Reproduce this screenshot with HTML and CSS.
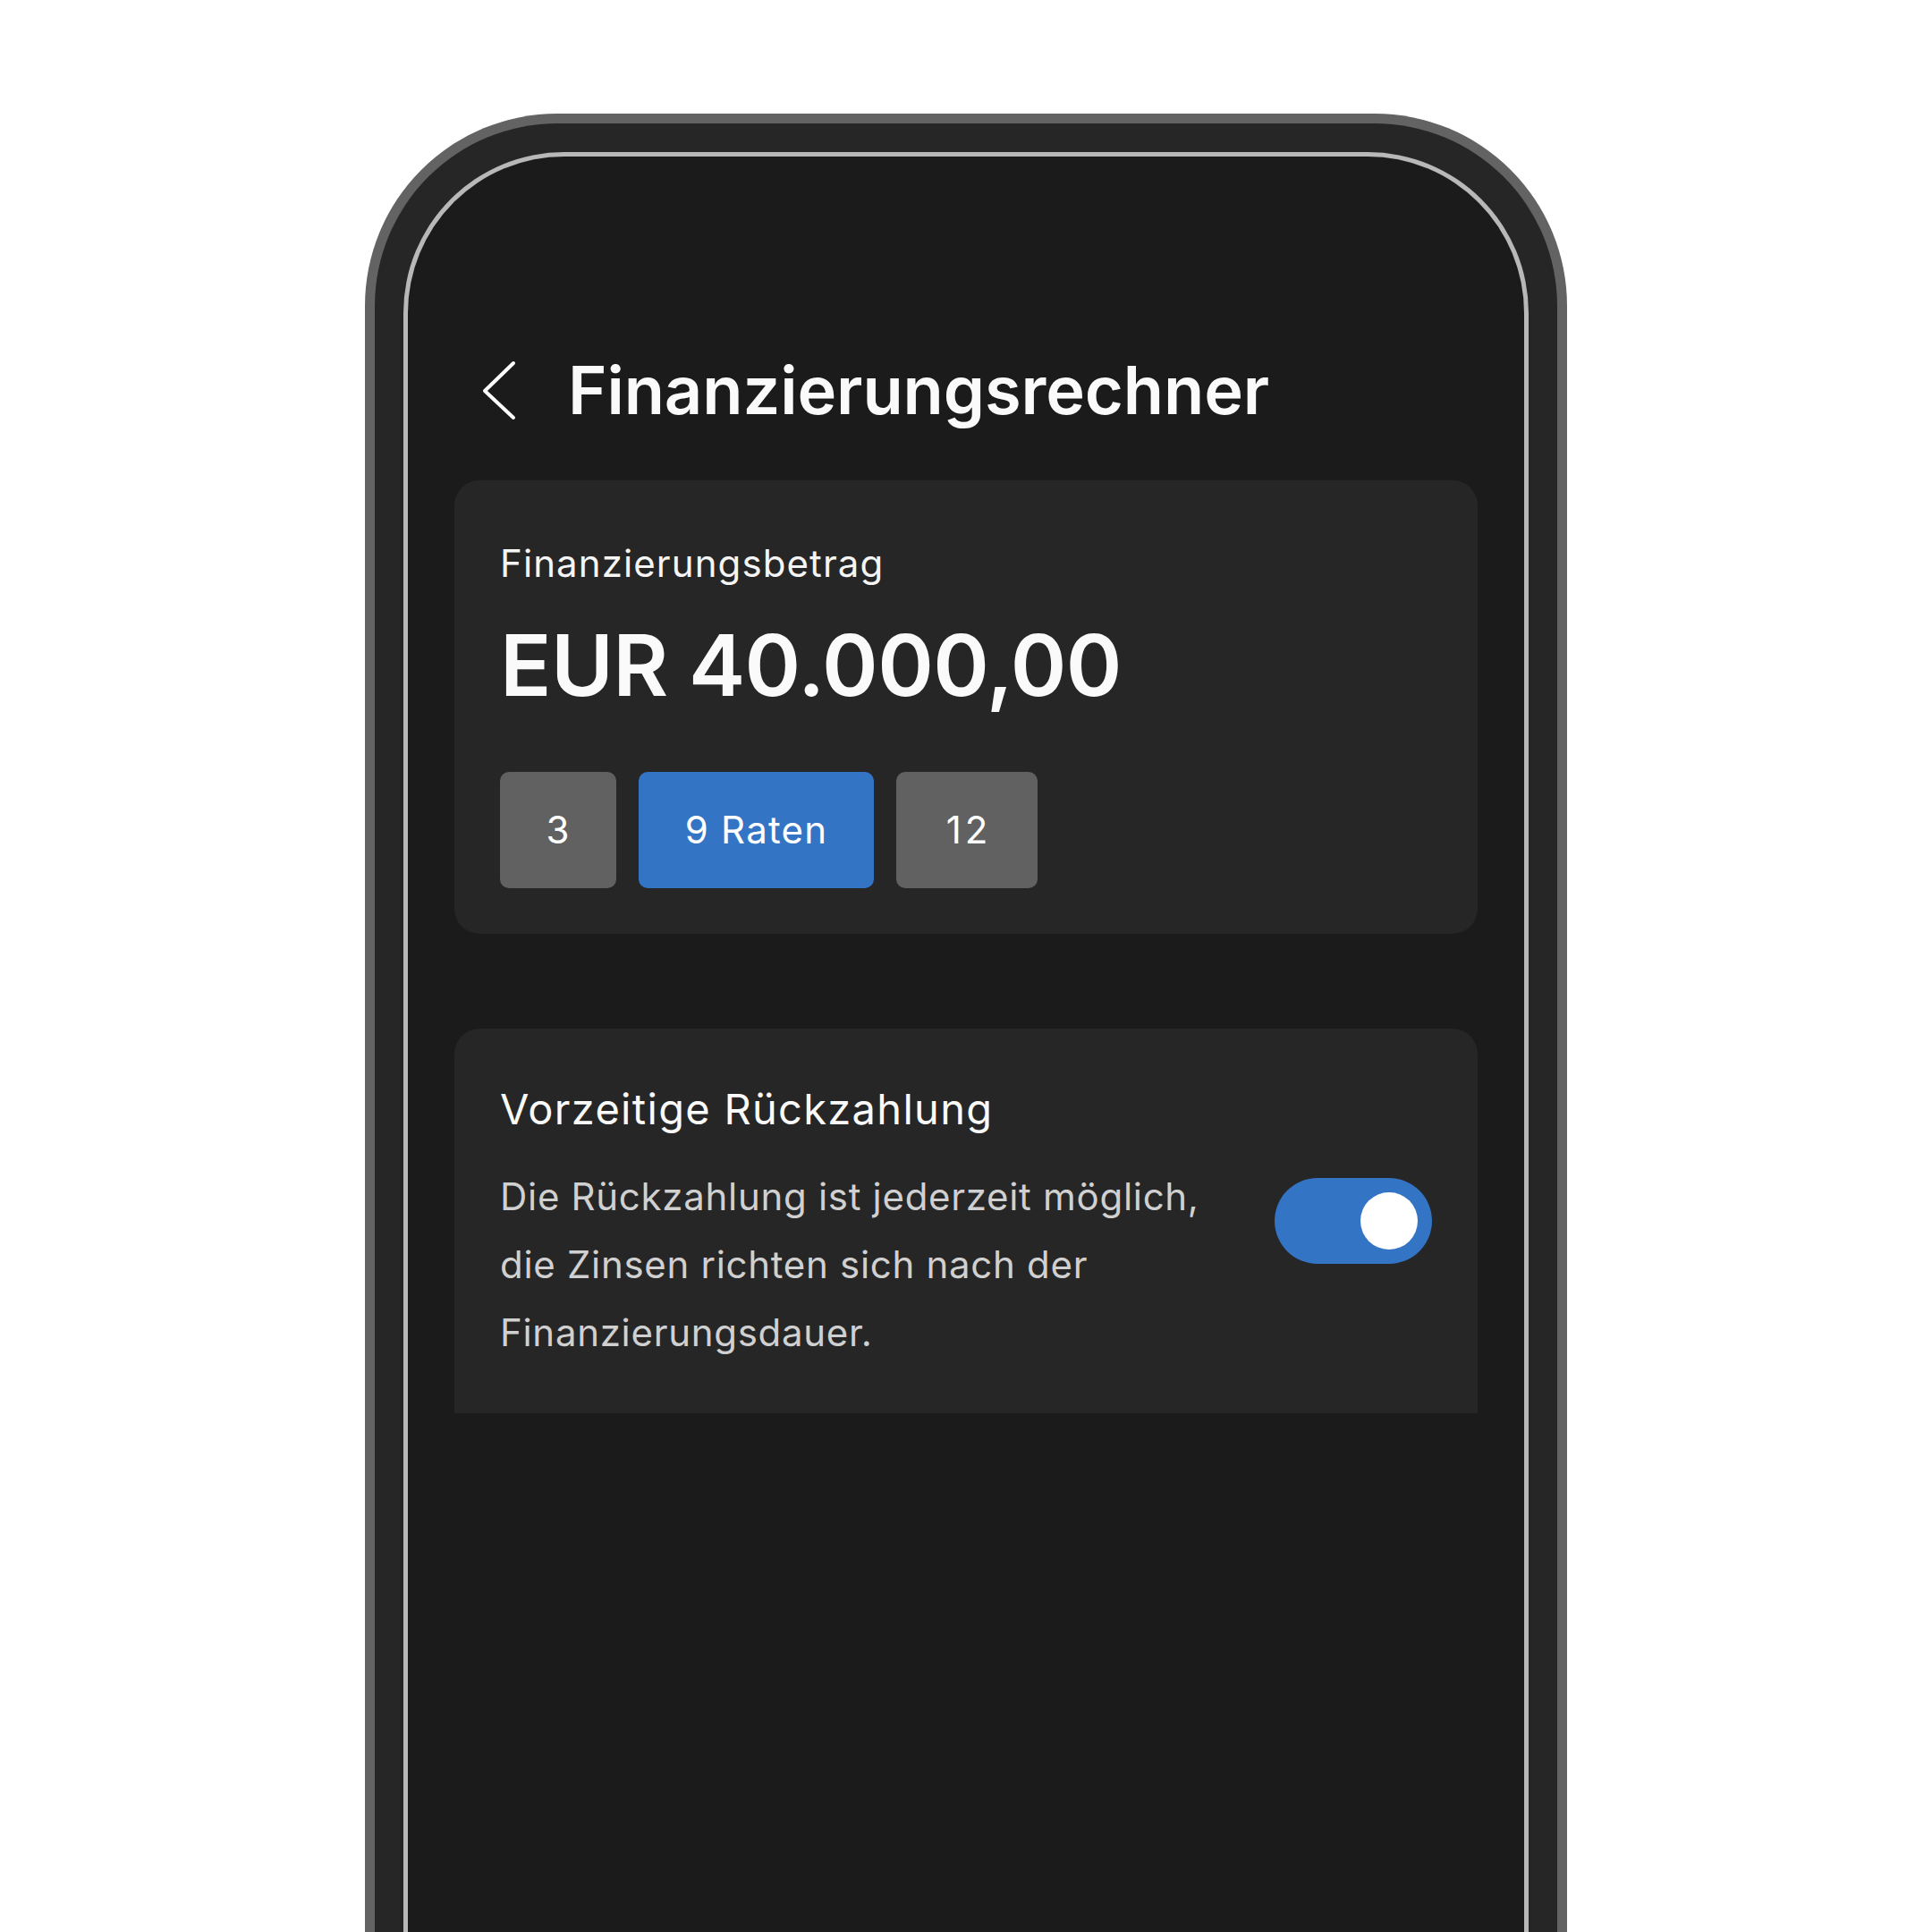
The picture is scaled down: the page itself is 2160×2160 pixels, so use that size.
FILE: index.html
```html
<!DOCTYPE html>
<html lang="de">
<head>
<meta charset="utf-8">
<title>Finanzierungsrechner</title>
<link rel="stylesheet" href="styles.css">
</head>
<body>
<div class="page">
  <div class="phone">
    <div class="screen">
      <header class="header">
        <svg class="back" width="40" height="69" viewBox="0 0 40 69" aria-label="Zurück">
          <polyline points="36,4 4,35 36,65" fill="none" stroke="#ffffff" stroke-width="4" stroke-linecap="round" stroke-linejoin="round"/>
        </svg>
        <h1 class="title">Finanzierungsrechner</h1>
      </header>

      <section class="card amount-card">
        <div class="label">Finanzierungsbetrag</div>
        <div class="amount">EUR 40.000,00</div>
        <div class="options">
          <button class="opt opt-sm">3</button>
          <button class="opt opt-active opt-lg">9 Raten</button>
          <button class="opt opt-md">12</button>
        </div>
      </section>

      <section class="card repay-card">
        <div class="repay-row">
          <div class="repay-text">
            <div class="repay-title">Vorzeitige Rückzahlung</div>
            <p class="repay-desc">Die Rückzahlung ist jederzeit möglich, die Zinsen richten sich nach der Finanzierungsdauer.</p>
          </div>
          <div class="toggle"><span class="knob"></span></div>
        </div>
      </section>
    </div>
  </div>
</div>
</body>
</html>
```

FILE: styles.css
```css
* { box-sizing: border-box; }
html, body {
  margin: 0;
  padding: 0;
  background: #ffffff;
  width: 2160px;
  height: 2160px;
  overflow: hidden;
}
body {
  font-family: Inter, "Noto Sans", "Liberation Sans", sans-serif;
  color: #fafafa;
}
.page {
  display: flex;
  justify-content: center;
  padding-top: 127px;
}
.phone {
  width: 1344px;
  height: 2033px;
  border: 11px solid #636363;
  border-bottom: none;
  border-radius: 215px 215px 0 0;
  background: #262626;
  padding: 32px 32px 0;
}
.screen {
  height: 100%;
  border: 5px solid #b8b8b8;
  border-bottom: none;
  border-radius: 180px 180px 0 0;
  background: #1b1b1b;
  padding-top: 216px;
}
.header {
  display: flex;
  align-items: center;
  height: 90px;
  padding-left: 82px;
}
.back {
  display: block;
  flex: none;
}
.title {
  margin: 0 0 0 57px;
  font-size: 74px;
  line-height: 90px;
  font-weight: 600;
  letter-spacing: -0.1px;
  color: #fafafa;
}
.card {
  margin: 0 52px;
  background: #262626;
  padding: 0 51px;
}
.amount-card {
  margin-top: 56px;
  border-radius: 28px;
  padding-top: 67px;
  padding-bottom: 51px;
}
.label {
  font-size: 42px;
  line-height: 52px;
  font-weight: 400;
  letter-spacing: 1.1px;
  color: #f5f5f5;
}
.amount {
  margin-top: 33px;
  font-size: 95px;
  line-height: 110px;
  font-weight: 600;
  color: #fafafa;
  letter-spacing: -0.6px;
}
.options {
  display: flex;
  gap: 25px;
  margin-top: 64px;
}
.opt {
  display: flex;
  align-items: center;
  justify-content: center;
  height: 130px;
  padding: 0;
  border: none;
  border-radius: 10px;
  background: #616161;
  color: #ffffff;
  font-family: inherit;
  font-size: 42px;
  font-weight: 400;
  letter-spacing: 1.2px;
  line-height: 1;
}
.opt-sm { width: 130px; }
.opt-lg { width: 263px; }
.opt-md { width: 158px; letter-spacing: 4px; text-indent: 4px; }
.opt-active {
  background: #3474c4;
}
.repay-card {
  margin-top: 106px;
  border-radius: 28px 28px 0 0;
  padding-top: 60px;
  padding-bottom: 52px;
}
.repay-row {
  display: flex;
  align-items: center;
  justify-content: space-between;
}
.repay-text {
  max-width: 840px;
}
.repay-title {
  font-size: 47px;
  line-height: 60px;
  font-weight: 400;
  letter-spacing: 1.3px;
  color: #fafafa;
}
.repay-desc {
  margin: 30px 0 0;
  font-size: 42px;
  line-height: 76px;
  letter-spacing: 0.7px;
  color: #d0d0d0;
}
.toggle {
  flex: none;
  width: 176px;
  height: 96px;
  border-radius: 48px;
  background: #3474c4;
  display: flex;
  align-items: center;
  justify-content: flex-end;
  padding-right: 16px;
  margin-bottom: 8px;
}
.knob {
  width: 64px;
  height: 64px;
  border-radius: 50%;
  background: #ffffff;
}
```
